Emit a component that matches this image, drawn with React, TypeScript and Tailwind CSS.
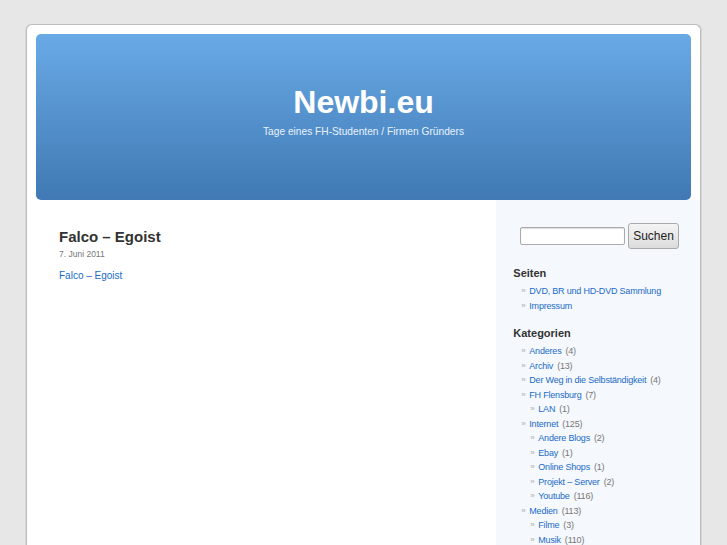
const pages = ["DVD, BR und HD-DVD Sammlung", "Impressum"];

type Cat = { name: string; count: number; children?: Cat[] };

const categories: Cat[] = [
  { name: "Anderes", count: 4 },
  { name: "Archiv", count: 13 },
  { name: "Der Weg in die Selbständigkeit", count: 4 },
  { name: "FH Flensburg", count: 7, children: [{ name: "LAN", count: 1 }] },
  {
    name: "Internet",
    count: 125,
    children: [
      { name: "Andere Blogs", count: 2 },
      { name: "Ebay", count: 1 },
      { name: "Online Shops", count: 1 },
      { name: "Projekt – Server", count: 2 },
      { name: "Youtube", count: 116 },
    ],
  },
  {
    name: "Medien",
    count: 113,
    children: [
      { name: "Filme", count: 3 },
      { name: "Musik", count: 110 },
    ],
  },
];

function Item({ label, count }: { label: string; count?: number }) {
  return (
    <div className="flex h-[14.5px] items-center whitespace-nowrap">
      <span className="w-[8px] shrink-0 text-[8px] leading-[14.5px] text-[#aaa]">»</span>
      <a className="text-[#1a6bc9]">{label}</a>
      {count !== undefined && <span className="ml-[4px] text-[#777]">({count})</span>}
    </div>
  );
}

function CatList({ items }: { items: Cat[] }) {
  return (
    <ul>
      {items.map((c) => (
        <li key={c.name}>
          <Item label={c.name} count={c.count} />
          {c.children && (
            <div className="pl-[9px]">
              <CatList items={c.children} />
            </div>
          )}
        </li>
      ))}
    </ul>
  );
}

export default function App() {
  return (
    <div className="h-[545px] overflow-hidden bg-[#e7e7e7] pt-[24px] font-['Liberation_Sans',Arial,sans-serif]">
      <div className="ml-[26px] w-[675px] overflow-hidden rounded-t-[6px] border border-b-0 border-[#bdbdbd] bg-white shadow-[1px_0_0_#d6d6d6,-1px_0_0_#d6d6d6]">
        <div className="px-[9px] pt-[9px]">
          <header className="flex h-[166px] flex-col items-center rounded-[5px] bg-[linear-gradient(180deg,#69aae6,#4079b3)] pt-[52px] text-white">
            <h1 className="text-[32px] font-bold leading-[32px]">Newbi.eu</h1>
            <p className="mt-[7px] text-[10.2px] leading-[13px] text-[#e8f1fb]">
              Tage eines FH-Studenten / Firmen Gründers
            </p>
          </header>
        </div>

        <div className="flex h-[346px]">
          <main className="w-[470px] pl-[32px] pt-[28px]">
            <h2 className="text-[15px] font-bold leading-[18px] text-[#333]">Falco – Egoist</h2>
            <p className="mt-[2px] text-[8.5px] leading-[12px] text-[#777]">7. Juni 2011</p>
            <p className="mt-[9px] text-[10px] leading-[14px]">
              <a className="text-[#1a6bc9]">Falco – Egoist</a>
            </p>
          </main>

          <aside className="w-[204px] bg-[#f5f8fc] pt-[23px] text-[9px] leading-[14.5px] tracking-[-0.2px]">
            <div className="flex items-center justify-end gap-[3px] pr-[21px]">
              <input className="h-[18px] w-[105px] rounded-[2px] border border-[#aaa] bg-white shadow-[inset_0_1px_1px_#ddd]" />
              <button className="h-[26px] w-[51px] rounded-[3px] border border-[#aaa] bg-[linear-gradient(180deg,#f4f4f4,#dcdcdc)] text-[12px] tracking-normal text-[#222]">
                Suchen
              </button>
            </div>

            <div className="pl-[17px]">
              <h3 className="mt-[17px] text-[11px] font-bold leading-[14px] tracking-normal text-[#333]">Seiten</h3>
              <ul className="mt-[4px] pl-[8px]">
                {pages.map((p) => (
                  <li key={p}>
                    <Item label={p} />
                  </li>
                ))}
              </ul>

              <h3 className="mt-[13px] text-[11px] font-bold leading-[14px] tracking-normal text-[#333]">Kategorien</h3>
              <div className="mt-[4px] pl-[8px]">
                <CatList items={categories} />
              </div>
            </div>
          </aside>
        </div>
      </div>
    </div>
  );
}
